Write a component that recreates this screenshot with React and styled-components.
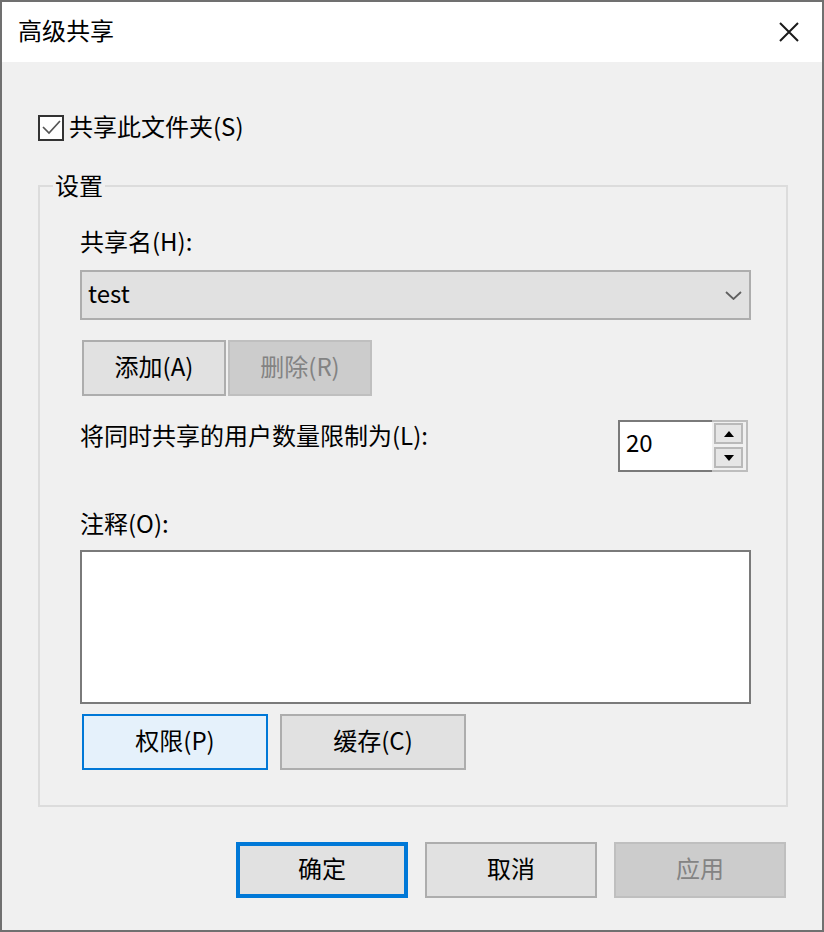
import React from "react";
import styled, { createGlobalStyle } from "styled-components";

const Global = createGlobalStyle`
  html, body { margin: 0; padding: 0; background: #f0f0f0; }
  body { font-family: "Noto Sans CJK SC", "Noto Sans", sans-serif; }
  * { box-sizing: border-box; }
`;

const Window = styled.div`
  width: 824px;
  height: 932px;
  border: 2px solid #707070;
  display: flex;
  flex-direction: column;
  background: #f0f0f0;
  color: #000;
  font-size: 24px;
  line-height: 32px;
`;

const TitleBar = styled.div`
  height: 60px;
  flex: none;
  background: #fff;
  display: flex;
  align-items: center;
  justify-content: space-between;
  padding: 0 23px 0 16px;
`;

const Title = styled.div`
  font-size: 24px;
  line-height: 32px;
  margin-bottom: 4px;
`;

const CloseIcon = styled.svg`
  width: 20px;
  height: 20px;
  display: block;
`;

const Body = styled.div`
  flex: 1;
  display: flex;
  flex-direction: column;
  padding: 50px 36px 32px 36px;
`;

const CheckRow = styled.label`
  display: flex;
  align-items: center;
  gap: 5px;
  height: 32px;
`;

const CheckText = styled.span`
  margin-bottom: 4px;
`;

const CheckBox = styled.span`
  width: 26px;
  height: 26px;
  border: 2px solid #333;
  background: #fff;
  display: flex;
  align-items: center;
  justify-content: center;
`;

const Group = styled.fieldset`
  margin: 25px -2px 0 0;
  padding: 0;
  border: 2px solid #dcdcdc;
  min-width: 0;
`;

const Legend = styled.legend`
  margin-left: 13px;
  padding: 0 2px 2px 2px;
  line-height: 32px;
`;

const GroupContent = styled.div`
  display: flex;
  flex-direction: column;
  padding: 24px 35px 35px 40px;
`;

const Label = styled.div`
  line-height: 32px;
  margin-top: ${(p) => (p.$mt || 0) - 2}px;
  margin-bottom: 2px;
`;

const Combo = styled.div`
  margin-top: 11px;
  height: 50px;
  border: 2px solid #adadad;
  background: #e1e1e1;
  display: flex;
  align-items: center;
  justify-content: space-between;
  padding: 0 7px 0 6px;
`;

const ComboText = styled.span`
  margin-bottom: 4px;
`;

const ButtonRow = styled.div`
  display: flex;
  gap: ${(p) => p.$gap}px;
  margin-top: ${(p) => p.$mt}px;
  padding-left: ${(p) => p.$pl || 0}px;
  justify-content: ${(p) => p.$justify || "flex-start"};
`;

const Button = styled.button`
  width: ${(p) => p.$w}px;
  height: 56px;
  font-family: inherit;
  font-size: 24px;
  line-height: 32px;
  padding: 0 0 4px 0;
  color: ${(p) => (p.disabled ? "#838383" : "#000")};
  background: ${(p) =>
    p.disabled ? "#cccccc" : p.$hot ? "#e5f1fb" : "#e1e1e1"};
  border: ${(p) => (p.$focus ? p.$focus : 2)}px solid
    ${(p) => (p.disabled ? "#bfbfbf" : p.$focus ? "#0078d7" : "#adadad")};
  display: flex;
  align-items: center;
  justify-content: center;
`;

const LimitRow = styled.div`
  margin-top: 24px;
  display: flex;
  justify-content: space-between;
  align-items: flex-start;
`;

const Spinner = styled.div`
  display: flex;
  height: 52px;
  margin-right: 3px;
`;

const SpinField = styled.div`
  width: 94px;
  background: #fff;
  border: 2px solid #7a7a7a;
  border-right: none;
  padding: 0 0 8px 6px;
  display: flex;
  align-items: center;
`;

const SpinColumn = styled.div`
  width: 36px;
  border: 2px solid #bdbdbd;
  border-left: none;
  background: #f0f0f0;
  padding: 1px 3px 2px 2px;
  display: flex;
  flex-direction: column;
  gap: 3px;
`;

const SpinButton = styled.div`
  flex: 1;
  border: 2px solid #b9b9b9;
  background: #e6e6e6;
  display: flex;
  align-items: center;
  justify-content: center;
`;

const Memo = styled.textarea`
  margin-top: 9px;
  height: 154px;
  border: 2px solid #7a7a7a;
  background: #fff;
  resize: none;
  outline: none;
  font-family: inherit;
  font-size: 24px;
`;

export default function App() {
  return (
    <>
      <Global />
      <Window>
        <TitleBar>
          <Title>高级共享</Title>
          <CloseIcon viewBox="0 0 20 20">
            <path d="M1 1 L19 19 M19 1 L1 19" stroke="#1a1a1a" strokeWidth="2" fill="none" />
          </CloseIcon>
        </TitleBar>
        <Body>
          <CheckRow>
            <CheckBox>
              <svg width="22" height="22" viewBox="0 0 22 22">
                <polyline points="3,10 9,16 20,4" fill="none" stroke="#555555" strokeWidth="1.7" />
              </svg>
            </CheckBox>
            <CheckText>共享此文件夹(S)</CheckText>
          </CheckRow>
          <Group>
            <Legend>设置</Legend>
            <GroupContent>
              <Label>共享名(H):</Label>
              <Combo>
                <ComboText>test</ComboText>
                <svg width="17" height="9" viewBox="0 0 17 9">
                  <polyline points="1,1 8.5,8 16,1" fill="none" stroke="#606060" strokeWidth="1.8" />
                </svg>
              </Combo>
              <ButtonRow $gap={2} $mt={20} $pl={2}>
                <Button $w={144}>添加(A)</Button>
                <Button $w={144} disabled>删除(R)</Button>
              </ButtonRow>
              <LimitRow>
                <Label $mt={1}>将同时共享的用户数量限制为(L):</Label>
                <Spinner>
                  <SpinField>20</SpinField>
                  <SpinColumn>
                    <SpinButton>
                      <svg width="10" height="6" viewBox="0 0 10 6">
                        <polygon points="0,6 10,6 5,0" fill="#000" />
                      </svg>
                    </SpinButton>
                    <SpinButton>
                      <svg width="10" height="6" viewBox="0 0 10 6">
                        <polygon points="0,0 10,0 5,6" fill="#000" />
                      </svg>
                    </SpinButton>
                  </SpinColumn>
                </Spinner>
              </LimitRow>
              <Label $mt={37}>注释(O):</Label>
              <Memo />
              <ButtonRow $gap={12} $mt={10} $pl={2}>
                <Button $w={186} $hot $focus={2}>权限(P)</Button>
                <Button $w={186}>缓存(C)</Button>
              </ButtonRow>
            </GroupContent>
          </Group>
          <ButtonRow $gap={17} $mt={35} $justify="flex-end">
            <Button $w={172} $focus={4}>确定</Button>
            <Button $w={172}>取消</Button>
            <Button $w={172} disabled>应用</Button>
          </ButtonRow>
        </Body>
      </Window>
    </>
  );
}
